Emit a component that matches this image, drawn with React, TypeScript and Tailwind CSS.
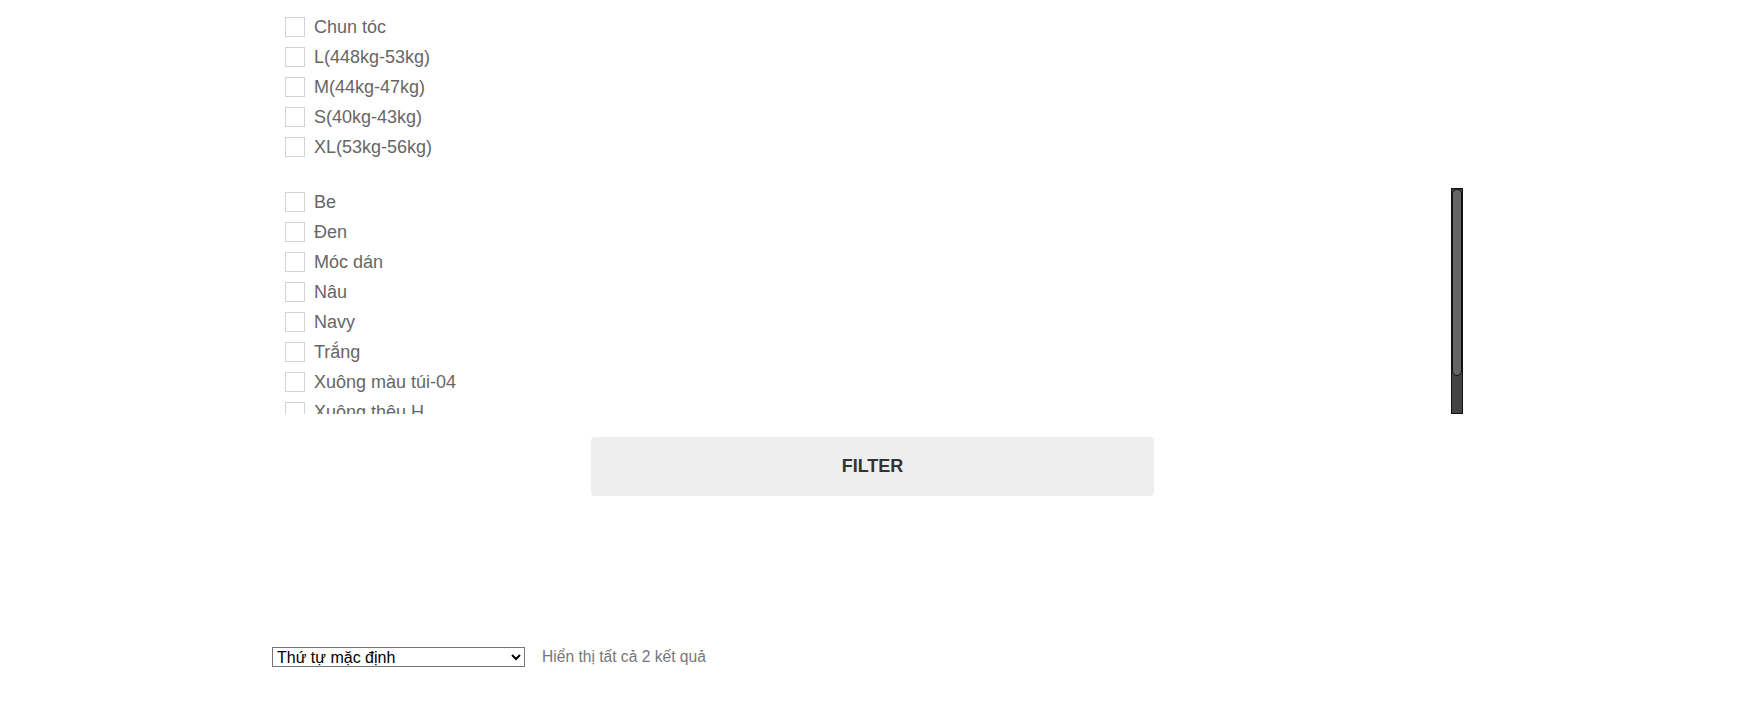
const sizes = [
  "Chun tóc",
  "L(448kg-53kg)",
  "M(44kg-47kg)",
  "S(40kg-43kg)",
  "XL(53kg-56kg)",
];

const colors = [
  "Be",
  "Đen",
  "Móc dán",
  "Nâu",
  "Navy",
  "Trắng",
  "Xuông màu túi-04",
  "Xuông thêu H",
  "Xuông trơn",
];

function FilterRow({ label }: { label: string }) {
  return (
    <label className="flex h-[30px] cursor-pointer items-start">
      <span className="block size-[20px] shrink-0 border border-[#d3d3d3] bg-white" />
      <span className="ml-[9px] whitespace-nowrap text-[18px] leading-[20px] text-[#666]">
        {label}
      </span>
    </label>
  );
}

export default function App() {
  return (
    <div className="min-h-[710px] w-[1740px] bg-white font-['Liberation_Sans',Arial,sans-serif]">
      <div className="pl-[270px] pt-[17px]">
        <div className="pl-[15px]">
          {sizes.map((item) => (
            <FilterRow key={item} label={item} />
          ))}
        </div>

        {/* colour list: scrolled box, scrollbar drawn by hand */}
        <div className="mt-[21px] flex h-[226px] w-[1193px]">
          <div className="min-w-0 flex-1 overflow-hidden pl-[15px] pt-[4px]">
            {colors.map((item) => (
              <FilterRow key={item} label={item} />
            ))}
          </div>
          <div className="flex w-[12px] shrink-0 flex-col border border-[#111] bg-[#444]">
            <div className="h-[187px] rounded-[6px] border border-[#111] bg-[#666]" />
          </div>
        </div>

        <div className="mt-[23px] pl-[321px]">
          <button
            className="flex h-[59px] w-[563px] items-center justify-center rounded-[4px] bg-[#eeeeee] text-[18px] font-bold text-[#333]"
            type="button"
          >
            FILTER
          </button>
        </div>

        <div className="mt-[151px] flex items-center pl-[2px]">
          <select
            className="h-[20px] w-[253px] border border-[#767676] bg-white text-[16px] leading-[18px] text-black"
            defaultValue="menu_order"
          >
            <option value="menu_order">Thứ tự mặc định</option>
            <option value="popularity">Thứ tự theo mức độ phổ biến</option>
            <option value="date">Mới nhất</option>
            <option value="price">Thứ tự theo giá: thấp đến cao</option>
            <option value="price-desc">Thứ tự theo giá: cao xuống thấp</option>
          </select>
          <p className="ml-[17px] text-[15.6px] leading-[20px] text-[#777]">
            Hiển thị tất cả 2 kết quả
          </p>
        </div>
      </div>
    </div>
  );
}
